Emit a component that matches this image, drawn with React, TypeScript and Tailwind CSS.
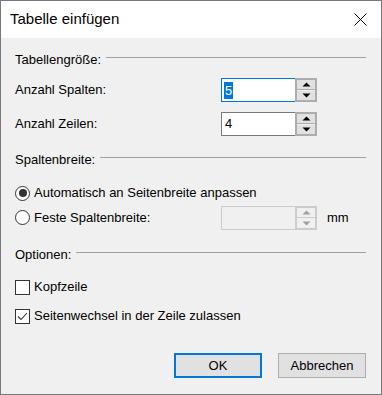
import React from "react";

const font = { fontFamily: '"Liberation Sans", Arial, sans-serif' };

function GroupHeader({ label, className = "" }: { label: string; className?: string }) {
  return (
    <div className={`flex h-4 items-center pr-[15px] ${className}`}>
      <span className="whitespace-nowrap">{label}</span>
      <div className="ml-[5px] mt-[-5px] flex-1 border-t border-[#a0a0a0]" />
    </div>
  );
}

function Arrow({ up, disabled }: { up?: boolean; disabled?: boolean }) {
  return (
    <svg width="9" height="5" viewBox="0 0 9 5">
      <path
        d={up ? "M0.5 4.5 L4.5 0.5 L8.5 4.5 Z" : "M0.5 0.5 L4.5 4.5 L8.5 0.5 Z"}
        fill={disabled ? "#a0a0a0" : "#000"}
      />
    </svg>
  );
}

function SpinBox({
  value,
  focused,
  disabled,
}: {
  value?: string;
  focused?: boolean;
  disabled?: boolean;
}) {
  const inputBorder = focused
    ? "border-[#0078d7]"
    : disabled
    ? "border-[#cccccc]"
    : "border-[#7a7a7a]";
  const spinBorder = disabled ? "border-[#cccccc]" : "border-[#adadad]";
  return (
    <div className="flex h-6">
      <div
        className={`flex w-[74px] items-center border border-r-0 ${inputBorder} ${
          disabled ? "bg-[#f0f0f0]" : "bg-white"
        } pl-[2px]`}
      >
        {value &&
          (focused ? (
            <span className="bg-[#0078d7] px-px leading-[17px] text-white">{value}</span>
          ) : (
            <span className="px-px">{value}</span>
          ))}
      </div>
      <div className={`flex w-[22px] flex-col gap-px border-2 ${spinBorder} bg-[#f0f0f0]`}>
        <div
          className={`flex flex-1 items-center justify-center ${
            disabled ? "bg-[#f0f0f0]" : "bg-[#e1e1e1]"
          } border-b ${spinBorder}`}
        >
          <Arrow up disabled={disabled} />
        </div>
        <div
          className={`flex flex-1 items-center justify-center ${
            disabled ? "bg-[#f0f0f0]" : "bg-[#e1e1e1]"
          }`}
        >
          <Arrow disabled={disabled} />
        </div>
      </div>
    </div>
  );
}

function Radio({ checked }: { checked?: boolean }) {
  return (
    <div className="flex h-[15px] w-[15px] items-center justify-center rounded-full border border-[#333] bg-white">
      {checked && <div className="h-[8px] w-[8px] rounded-full bg-[#333]" />}
    </div>
  );
}

function Checkbox({ checked }: { checked?: boolean }) {
  return (
    <div className="flex h-[15px] w-[15px] items-center justify-center border border-[#333] bg-white">
      {checked && (
        <svg width="13" height="13" viewBox="0 0 13 13">
          <path d="M2 6.5 L5 9.5 L11 3" fill="none" stroke="#333" strokeWidth="1.1" />
        </svg>
      )}
    </div>
  );
}

export default function App() {
  return (
    <div
      style={font}
      className="flex h-[395px] w-[382px] flex-col border border-[#7a7a7a] bg-[#f0f0f0] text-[13px] text-black"
    >
      {/* Title bar */}
      <div className="flex h-[37px] items-center justify-between bg-white pl-[9px] pr-[14px]">
        <span className="text-[15px]">Tabelle einfügen</span>
        <svg width="13" height="13" viewBox="0 0 13 13">
          <path d="M0.5 0.5 L12.5 12.5 M12.5 0.5 L0.5 12.5" stroke="#000" strokeWidth="1" />
        </svg>
      </div>

      <div className="flex flex-col pl-[14px]">
        <GroupHeader label="Tabellengröße:" className="mt-[14px]" />

        <div className="mt-[10px] flex h-6 items-center">
          <span className="w-[206px]">Anzahl Spalten:</span>
          <SpinBox value="5" focused />
        </div>
        <div className="mt-[10px] flex h-6 items-center">
          <span className="w-[206px]">Anzahl Zeilen:</span>
          <SpinBox value="4" />
        </div>

        <GroupHeader label="Spaltenbreite:" className="mt-[16px]" />

        <div className="mt-[17px] flex h-4 items-center gap-[4px]">
          <Radio checked />
          <span>Automatisch an Seitenbreite anpassen</span>
        </div>
        <div className="mt-[5px] flex h-[23px] items-center">
          <div className="flex w-[206px] items-center gap-[4px]">
            <Radio />
            <span>Feste Spaltenbreite:</span>
          </div>
          <SpinBox disabled />
          <span className="ml-[10px]">mm</span>
        </div>

        <GroupHeader label="Optionen:" className="mt-[18px]" />

        <div className="mt-[17px] flex h-[14px] items-center gap-[4px]">
          <Checkbox />
          <span>Kopfzeile</span>
        </div>
        <div className="mt-[15px] flex h-[14px] items-center gap-[4px]">
          <Checkbox checked />
          <span>Seitenwechsel in der Zeile zulassen</span>
        </div>

        <div className="mt-[30px] flex justify-end gap-4 pr-[15px]">
          <button className="h-[25px] w-[88px] border-2 border-[#0078d7] bg-[#e1e1e1]">OK</button>
          <button className="h-[25px] w-[88px] border border-[#adadad] bg-[#e1e1e1]">Abbrechen</button>
        </div>
      </div>
    </div>
  );
}
